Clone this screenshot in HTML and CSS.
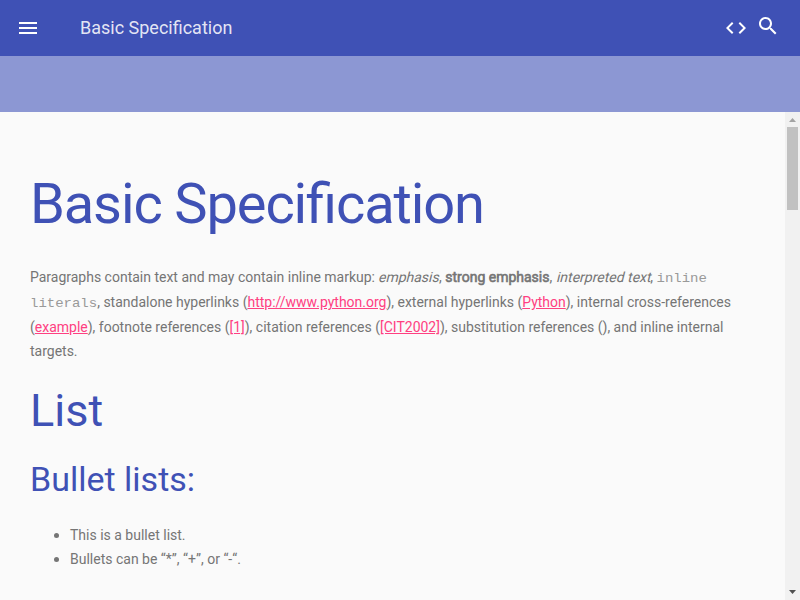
FILE: index.html
```html
<!DOCTYPE html>
<html lang="en">
<head>
<meta charset="utf-8">
<title>Basic Specification</title>
<link rel="stylesheet" href="styles.css">
</head>
<body>
<div class="layout">
  <header class="header">
    <button class="icon-button menu" aria-label="Menu"><svg width="24" height="24" viewBox="0 0 24 24"><path d="M3 18h18v-2H3v2zm0-5h18v-2H3v2zm0-7v2h18V6H3z"/></svg></button>
    <span class="title">Basic Specification</span>
    <nav class="actions">
      <svg class="code" width="24" height="24" viewBox="0 0 24 24"><path d="M9.4 16.6L4.8 12l4.6-4.6L8 6l-6 6 6 6 1.4-1.4zm5.2 0l4.6-4.6-4.6-4.6L16 6l6 6-6 6-1.4-1.4z"/></svg>
      <svg class="search" width="24" height="24" viewBox="0 0 24 24"><path d="M15.5 14h-.79l-.28-.27C15.41 12.59 16 11.11 16 9.5 16 5.91 13.09 3 9.5 3S3 5.91 3 9.5 5.91 16 9.5 16c1.61 0 3.09-.59 4.23-1.57l.27.28v.79l5 4.99L20.49 19l-4.99-5zm-6 0C7.01 14 5 11.99 5 9.5S7.01 5 9.5 5 14 7.01 14 9.5 11.99 14 9.5 14z"/></svg>
    </nav>
  </header>
  <div class="subheader"></div>
  <div class="body">
    <main class="content">
      <h1>Basic Specification</h1>
      <p>Paragraphs contain text and may contain inline markup: <em>emphasis</em>, <strong>strong emphasis</strong>, <em>interpreted text</em>, <code><span>inline</span> <span>literals</span></code>, standalone hyperlinks (<a href="#">http://www.python.org</a>), external hyperlinks (<a href="#">Python</a>), internal cross-references (<a href="#">example</a>), footnote references (<a href="#">[1]</a>), citation references (<a href="#">[CIT2002]</a>), substitution references (), and inline internal targets.</p>
      <h2>List</h2>
      <h3>Bullet lists:</h3>
      <ul>
        <li>This is a bullet list.</li>
        <li>Bullets can be “*”, “+”, or “-“.</li>
      </ul>
    </main>
    <div class="scrollbar">
      <svg width="15" height="15" viewBox="0 0 15 15"><path class="dim" d="M4 10h7L7.5 6z"/></svg>
      <div class="track"><div class="thumb"></div></div>
      <svg width="15" height="15" viewBox="0 0 15 15"><path d="M4 5h7L7.5 9z"/></svg>
    </div>
  </div>
</div>
</body>
</html>
```
FILE: styles.css
```css
* { box-sizing: border-box; }
body { margin: 0; font-family: Roboto, sans-serif; color: #757575; background: #fafafa; }
.layout { height: 100vh; display: flex; flex-direction: column; overflow: hidden; }
.header { height: 56px; flex: none; display: flex; align-items: center; padding: 0 20px 0 16px; background: #3f51b5; color: rgba(255,255,255,.87); }
.header svg { display: block; fill: #fff; }
.icon-button { border: 0; padding: 0; background: none; width: 64px; }
.title { font-size: 18px; line-height: 20px; font-weight: 400; }
.actions { margin-left: auto; display: flex; gap: 8px; }
.search { margin-top: -2px; }
.subheader { height: 56px; flex: none; background: #8c97d3; }
.body { flex: 1; min-height: 0; display: flex; }
.content { flex: 1; padding: 0 30px; overflow: hidden; font-size: 14px; line-height: 24px; }
h1, h2, h3 { color: #3f51b5; font-weight: 400; }
h1 { font-size: 56px; line-height: 76px; letter-spacing: -.02em; font-feature-settings: "liga" 1; margin: 54px 0 23px; }
p { margin: 0; height: 98px; letter-spacing: -.006px; }
h2 { font-size: 45px; line-height: 48px; margin: 24px 0; }
h3 { font-size: 34px; line-height: 40px; margin: 21px 0 24px; }
a { color: #ff4081; }
em { display: inline-block; line-height: 1; font-style: normal; transform: skewX(-14deg); transform-origin: 0 85%; }
strong { font-weight: 400; -webkit-text-stroke: .6px currentColor; }
code { font-family: "Liberation Mono", monospace; font-size: 14px; line-height: 16px; color: #999; }
code span { display: inline-block; padding-bottom: 4px; transform: scaleY(.85); transform-origin: 0 12px; }
ul { margin: 0; padding-left: 40px; line-height: 24px; list-style: none; }
li { height: 24px; }
li::before { content: ""; display: inline-block; width: 5px; height: 5px; margin: 0 11px 2px -16px; border-radius: 50%; background: currentColor; }
.scrollbar { width: 15px; display: flex; flex-direction: column; background: #f1f1f1; }
.scrollbar svg { display: block; fill: #505050; }
.scrollbar .dim { fill: #a3a3a3; }
.track { flex: 1; padding: 0 2px; }
.thumb { height: 83px; background: #c1c1c1; }
```
